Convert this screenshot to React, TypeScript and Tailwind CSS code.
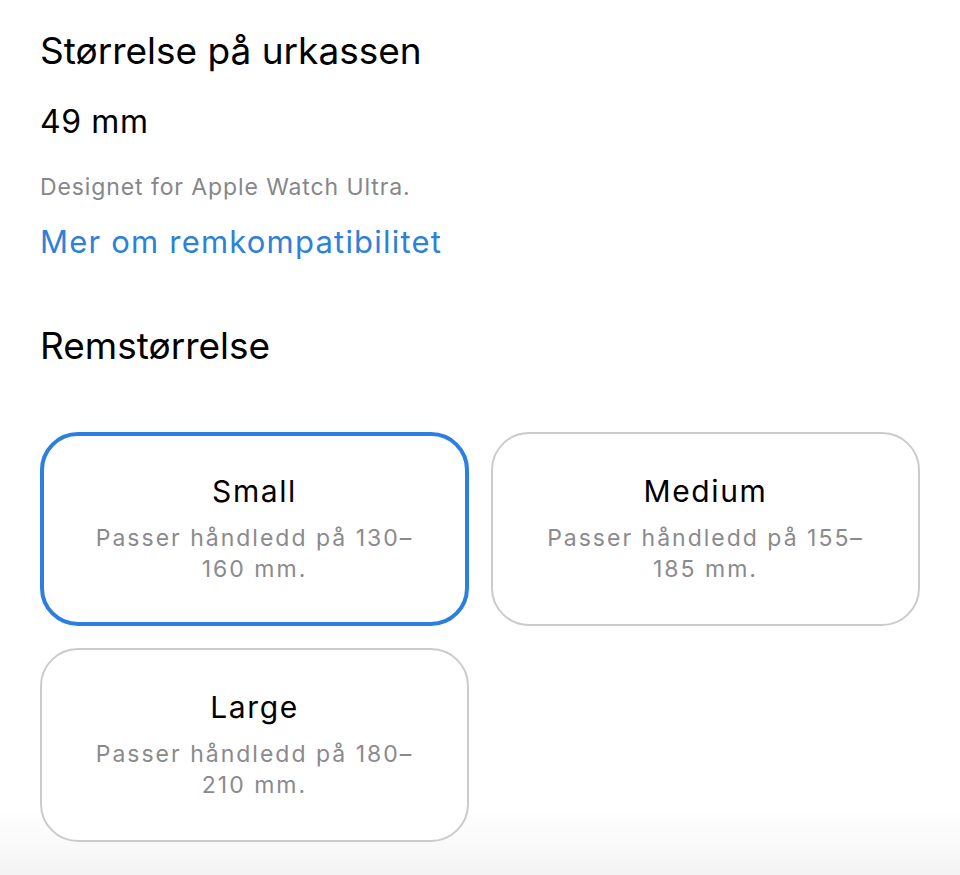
import React from "react";

const font = { fontFamily: 'Inter, "Liberation Sans", Arial, sans-serif' };

function Card({ title, desc, selected }: { title: string; desc: React.ReactNode; selected?: boolean }) {
  return (
    <div
      className={
        "h-[194px] rounded-[38px] flex flex-col items-center justify-center text-center bg-white " +
        (selected ? "border-[4px] border-[#2a7fe0]" : "border-2 border-[#cbcbcf]")
      }
    >
      <div className="text-[30px] leading-[34px] tracking-[1.6px] text-black">{title}</div>
      <div className="mt-[15px] text-[23px] leading-[31px] tracking-[2px] text-[#8a8a8e]">{desc}</div>
    </div>
  );
}

export default function App() {
  return (
    <div
      className="w-[960px] h-[875px] overflow-hidden bg-[linear-gradient(to_bottom,#ffffff_0px,#ffffff_810px,#f4f4f4_875px)] px-[40px] pt-[29px]"
      style={font}
    >
      <h1 className="text-[37px] leading-[44px] text-black">Størrelse på urkassen</h1>
      <div className="mt-[30px] text-[32px] leading-[38px] tracking-[0.6px] text-black">49 mm</div>
      <div className="mt-[32px] text-[23px] leading-[28px] tracking-[0.9px] text-[#86868b]">
        Designet for Apple Watch Ultra.
      </div>
      <div className="mt-[22px] text-[31px] leading-[38px] tracking-[1.2px] text-[#2f80d8]">
        Mer om remkompatibilitet
      </div>
      <h2 className="mt-[63px] text-[37px] leading-[44px] text-black">Remstørrelse</h2>
      <div className="mt-[64px] grid grid-cols-2 gap-[22px] w-[880px]">
        <Card
          selected
          title="Small"
          desc={
            <>
              Passer håndledd på 130–
              <br />
              160 mm.
            </>
          }
        />
        <Card
          title="Medium"
          desc={
            <>
              Passer håndledd på 155–
              <br />
              185 mm.
            </>
          }
        />
        <Card
          title="Large"
          desc={
            <>
              Passer håndledd på 180–
              <br />
              210 mm.
            </>
          }
        />
      </div>
    </div>
  );
}
